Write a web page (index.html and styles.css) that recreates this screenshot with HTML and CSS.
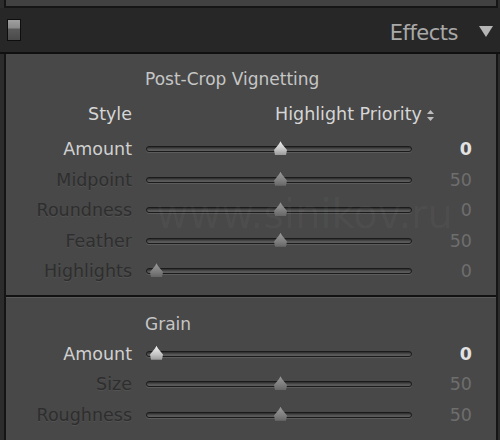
FILE: index.html
```html
<!DOCTYPE html>
<html>
<head>
<title>Effects</title>
<link rel="stylesheet" href="styles.css">
</head>
<body>
	<div class="topStrip"></div>
	<header class="panelHeader">
		<span class="toggle"></span>
		<h1>Effects</h1>
		<span class="collapse"></span>
	</header>
	<article class="panel">
		<section class="group vignette">
			<h2>Post-Crop Vignetting</h2>
			<label class="styleLabel">Style</label>
			<div class="popup">Highlight Priority
				<svg class="arrows" width="7" height="11" viewBox="0 0 7 11"><path d="M3.5 0 L7 4 L0 4 Z M0 7 L7 7 L3.5 11 Z" fill="#bdbdbd"/></svg>
			</div>
			<div class="row on">
				<label>Amount</label>
				<div class="track"><span class="thumb at50"></span></div>
				<span class="value">0</span>
			</div>
			<div class="row off">
				<label>Midpoint</label>
				<div class="track"><span class="thumb at50"></span></div>
				<span class="value">50</span>
			</div>
			<div class="row off">
				<label>Roundness</label>
				<div class="track"><span class="thumb at50"></span></div>
				<span class="value">0</span>
			</div>
			<div class="row off">
				<label>Feather</label>
				<div class="track"><span class="thumb at50"></span></div>
				<span class="value">50</span>
			</div>
			<div class="row off">
				<label>Highlights</label>
				<div class="track"><span class="thumb at0"></span></div>
				<span class="value">0</span>
			</div>
			<div class="watermark">www.sinikov.ru</div>
		</section>
		<section class="group grain">
			<h2>Grain</h2>
			<div class="row on">
				<label>Amount</label>
				<div class="track"><span class="thumb at0"></span></div>
				<span class="value">0</span>
			</div>
			<div class="row off">
				<label>Size</label>
				<div class="track"><span class="thumb at50"></span></div>
				<span class="value">50</span>
			</div>
			<div class="row off">
				<label>Roughness</label>
				<div class="track"><span class="thumb at50"></span></div>
				<span class="value">50</span>
			</div>
		</section>
	</article>
</body>
</html>
```

FILE: styles.css
```css
body{
	margin:0;
	width:500px;
	height:440px;
	overflow:hidden;
	background-color:#2c2c2c;
	font-family:"DejaVu Sans", "Open Sans", sans-serif;
}
.topStrip{
	height:6px;
	margin:0 2px 0 4px;
	background-color:#414141;
	border:2px solid #151515;
	border-top:none;
}
.panelHeader{
	height:44px;
	display:flex;
	align-items:center;
	padding:0 7px;
	background-color:#272727;
	border-bottom:2px solid #101010;
}
.toggle{
	width:12px;
	height:20px;
	border:1px solid #0e0e0e;
	background:linear-gradient(#a0a0a0 0%, #8a8a8a 40%, #5a5a5a 45%, #4a4a4a 100%);
}
.panelHeader h1{
	margin:6px 0 0 auto;
	font-size:21px;
	font-weight:normal;
	color:#a9a9a9;
	letter-spacing:-0.5px;
}
.collapse{
	width:0;
	height:0;
	margin:2px 0 0 21px;
	border-left:7px solid transparent;
	border-right:7px solid transparent;
	border-top:11px solid #b5b5b5;
}
.panel{
	margin:0 2px 0 4px;
	border-left:2px solid #151515;
	border-right:2px solid #151515;
	background-color:#484848;
	height:400px;
}
.group{
	position:relative;
	display:grid;
	grid-template-columns:126px 266px 46px;
	column-gap:14px;
	align-content:start;
}
.vignette{
	grid-template-rows:30px 35px repeat(5, 30.5px);
	padding:15px 0 8px;
	border-bottom:2px solid #121212;
	box-shadow:0 1px 0 #5a5a5a;
}
.grain{
	grid-template-rows:25px repeat(3, 30.5px);
	padding:17px 0 20px;
}
h2{
	grid-column:2 / 4;
	align-self:start;
	margin:0 0 0 -1px;
	height:20px;
	line-height:20px;
	font-size:17px;
	font-weight:normal;
	color:#c6c6c6;
}
.row{
	display:contents;
}
label, .value, .popup{
	font-size:17.5px;
	line-height:20px;
}
.row label, .row .value{
	align-self:center;
	text-align:right;
}
.styleLabel, .popup{
	align-self:start;
	margin-top:5px;
	color:#d6d6d6;
}
.styleLabel{
	text-align:right;
}
.popup{
	grid-column:2 / 4;
	padding-left:129px;
	white-space:nowrap;
}
.arrows{
	vertical-align:-1px;
}
.on label{
	color:#d0d0d0;
}
.on .value{
	color:#e2e2e2;
	font-weight:bold;
}
.off label{
	color:#2e2e2e;
	text-shadow:0 1px 0 #525252;
}
.off .value{
	color:#6e6e6e;
}
.track{
	position:relative;
	align-self:center;
	height:4px;
	border:1px solid #1b1b1b;
	border-radius:3px;
	background:linear-gradient(#2a2a2a, #555 60%, #5e5e5e);
	box-shadow:0 1px 0 #5c5c5c;
}
.thumb{
	position:absolute;
	top:-6px;
	width:13px;
	height:14px;
	margin-left:-6px;
	clip-path:polygon(50% 0, 62% 20%, 100% 62%, 92% 100%, 8% 100%, 0 62%, 38% 20%);
}
.on .thumb{
	background:linear-gradient(#f2f2f2, #c4c4c4 60%, #9a9a9a);
}
.off .thumb{
	background:linear-gradient(#9a9a9a, #7e7e7e 60%, #666);
}
.at0{
	left:9px;
}
.at50{
	left:133px;
}
.watermark{
	position:absolute;
	left:150px;
	top:137px;
	font-size:40px;
	color:rgba(255,255,255,0.035);
	pointer-events:none;
}
```
